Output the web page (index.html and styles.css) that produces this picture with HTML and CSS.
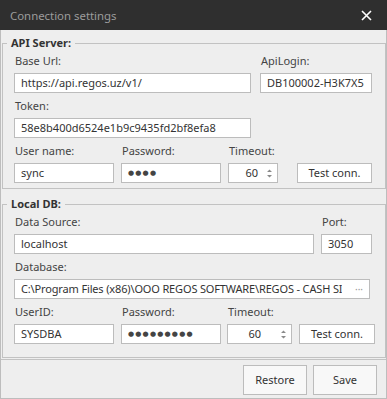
FILE: index.html
```html
<!DOCTYPE html>
<html lang="en">
<head>
    <meta charset="UTF-8">
    <title>Connection settings</title>
    <link rel="stylesheet" href="styles.css">
</head>
<body>
    <div class="window">
        <div class="titlebar">
            <span class="title">Connection settings</span>
            <svg class="close" width="11" height="11" viewBox="0 0 11 11">
                <path d="M1 1 L10 10 M10 1 L1 10" stroke="#fff" stroke-width="1.6" />
            </svg>
        </div>

        <fieldset class="group api">
            <legend>API Server:</legend>
            <div class="row">
                <div class="cell w-url">
                    <label>Base Url:</label>
                    <div class="box">https://api.regos.uz/v1/</div>
                </div>
                <div class="cell w-login">
                    <label>ApiLogin:</label>
                    <div class="box">DB100002-H3K7X5</div>
                </div>
            </div>
            <div class="row">
                <div class="cell w-url">
                    <label>Token:</label>
                    <div class="box">58e8b400d6524e1b9c9435fd2bf8efa8</div>
                </div>
            </div>
            <div class="row">
                <div class="cell w-user">
                    <label>User name:</label>
                    <div class="box">sync</div>
                </div>
                <div class="cell w-user">
                    <label>Password:</label>
                    <div class="box dots">●●●●</div>
                </div>
                <div class="cell w-time">
                    <label>Timeout:</label>
                    <div class="box spin"><span>60</span>
                        <svg width="7" height="11" viewBox="0 0 7 11"><path d="M3.5 1.5 L6 4 L1 4 Z M1 7 L6 7 L3.5 9.5 Z" fill="#8a8a8a" /></svg>
                    </div>
                </div>
                <div class="cell w-btn">
                    <div class="btn small">Test conn.</div>
                </div>
            </div>
        </fieldset>

        <fieldset class="group local">
            <legend>Local DB:</legend>
            <div class="row">
                <div class="cell w-source">
                    <label>Data Source:</label>
                    <div class="box">localhost</div>
                </div>
                <div class="cell w-port">
                    <label>Port:</label>
                    <div class="box">3050</div>
                </div>
            </div>
            <div class="row">
                <div class="cell w-db">
                    <label>Database:</label>
                    <div class="box browse"><span class="clip">C:\Program Files (x86)\OOO REGOS SOFTWARE\REGOS - CASH SI</span><span class="more">···</span></div>
                </div>
            </div>
            <div class="row">
                <div class="cell w-user">
                    <label>UserID:</label>
                    <div class="box">SYSDBA</div>
                </div>
                <div class="cell w-user">
                    <label>Password:</label>
                    <div class="box dots">●●●●●●●●●</div>
                </div>
                <div class="cell w-time2">
                    <label>Timeout:</label>
                    <div class="box spin"><span>60</span>
                        <svg width="7" height="11" viewBox="0 0 7 11"><path d="M3.5 1.5 L6 4 L1 4 Z M1 7 L6 7 L3.5 9.5 Z" fill="#8a8a8a" /></svg>
                    </div>
                </div>
                <div class="cell w-btn2">
                    <div class="btn small">Test conn.</div>
                </div>
            </div>
        </fieldset>

        <div class="footer">
            <div class="btn big">Restore</div>
            <div class="btn big">Save</div>
        </div>
    </div>
</body>
</html>
```

FILE: styles.css
```css
body {
    margin: 0;
    font-family: "Noto Sans", "Open Sans", sans-serif;
    font-size: 11px;
    color: #3a3a3a;
    background-color: #eeeeee;
}
.window {
    width: 387px;
    height: 399px;
    box-sizing: border-box;
    background-color: #eeeeee;
    border: 1px solid #bdbdbd;
    border-top: none;
    display: flex;
    flex-direction: column;
}
.titlebar {
    height: 30px;
    margin: 0 -1px;
    background-color: #2f2f2f;
    display: flex;
    align-items: center;
    justify-content: space-between;
    padding: 0 15px 0 10px;
    flex-shrink: 0;
}
.title {
    color: #9c9c9c;
    font-size: 11.4px;
}
.group {
    margin: 5px 0 0 1px;
    padding: 1px 0 5px 11px;
    border: 1px solid #c2c2c2;
    min-width: 0;
}
.group.local {
    margin-top: 7px;
    padding-bottom: 13px;
}
.group legend {
    font-weight: bold;
    color: #333;
    padding: 0 4px;
    margin-left: -7px;
    line-height: 16px;
}
.row {
    display: flex;
    gap: 7px;
    align-items: flex-end;
    margin-top: 5px;
}
.row:first-of-type {
    margin-top: 1px;
}
.cell {
    display: flex;
    flex-direction: column;
}
.cell label {
    line-height: 16px;
    margin-bottom: 4px;
    padding-left: 1px;
    color: #444;
}
.w-url { width: 237px; }
.w-login { width: 112px; margin-left: 2px; }
.w-login .box { padding-right: 0; }
.w-user { width: 100px; }
.w-time { width: 50px; }
.w-btn { width: 75px; margin-left: 12px; }
.w-source { width: 300px; }
.w-port { width: 51px; }
.w-db { width: 356px; }
.w-time2 { width: 65px; margin-left: -1px; }
.w-time2 .spin span { margin-right: 11px; }
.w-btn2 { width: 76px; }
.box {
    height: 20px;
    box-sizing: border-box;
    border: 1px solid #bcbcbc;
    background-color: #fff;
    padding: 0 6px;
    line-height: 18px;
    white-space: nowrap;
    overflow: hidden;
    color: #333;
}
.dots {
    font-family: "DejaVu Sans", sans-serif;
    font-size: 7px;
    letter-spacing: 1.2px;
    color: #444;
}
.spin {
    display: flex;
    align-items: center;
    justify-content: flex-end;
    gap: 8px;
    padding-right: 4px;
}
.browse {
    display: flex;
    justify-content: space-between;
}
.clip {
    overflow: hidden;
    letter-spacing: -0.15px;
}
.more {
    color: #999;
    padding-left: 5px;
    font-size: 10px;
}
.btn {
    box-sizing: border-box;
    border: 1px solid #bcbcbc;
    background-color: #fff;
    text-align: center;
    color: #333;
}
.btn.small {
    height: 20px;
    line-height: 18px;
}
.footer {
    margin-top: 1px;
    border-top: 1px solid #c2c2c2;
    display: flex;
    justify-content: flex-end;
    gap: 6px;
    padding: 5px 9px 0 0;
}
.btn.big {
    width: 64px;
    height: 30px;
    line-height: 28px;
    background-color: #f8f8f8;
}
```
